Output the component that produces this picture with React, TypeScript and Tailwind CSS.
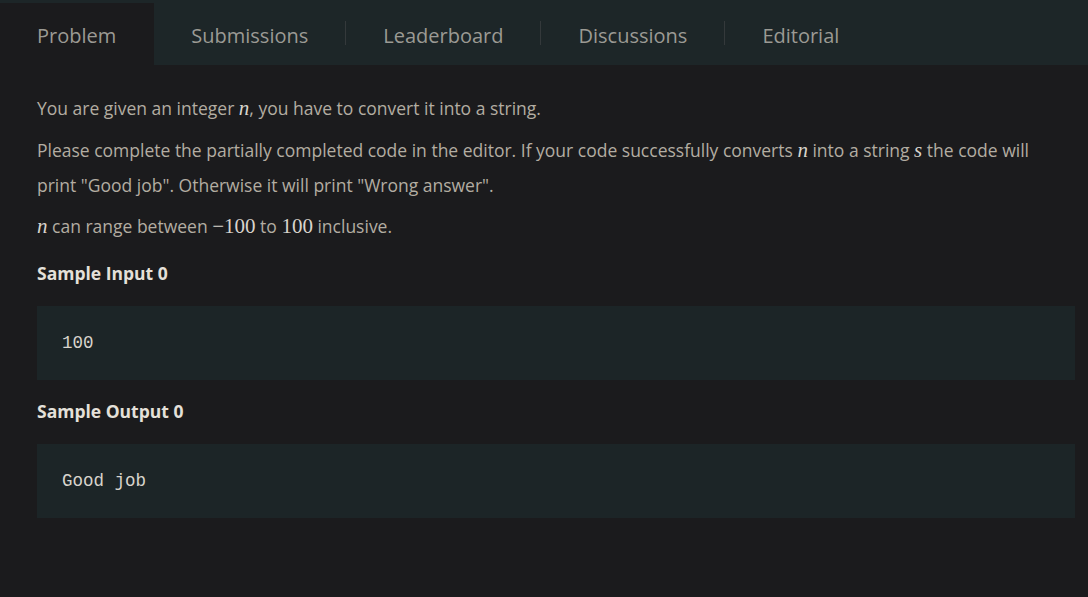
import React from "react";

const M = ({ children }: { children: React.ReactNode }) => (
  <span className="font-['Liberation_Serif',serif] text-[21px] italic leading-none text-[#d8d4cc]">{children}</span>
);
const N = ({ children }: { children: React.ReactNode }) => (
  <span className="font-['Liberation_Serif',serif] text-[21px] leading-none text-[#d8d4cc]">{children}</span>
);

export default function App() {
  const tabs = ["Submissions", "Leaderboard", "Discussions", "Editorial"];
  return (
    <div className="min-h-[597px] w-[1088px] bg-[#1b1b1d] font-['Open_Sans',sans-serif]">
      <div className="flex h-[65px] bg-[#1d2628]">
        <div className="mt-[3px] flex items-center bg-[#1b1b1d] pl-[37px] pr-[38px] pt-[4px] text-[20px] text-[#9b9a94]">
          Problem
        </div>
        {tabs.map((t, i) => (
          <div key={t} className="flex items-center">
            {i > 0 && <div className="h-[24px] w-px bg-[#34393b]" />}
            <div className="px-[37px] pt-[7px] text-[20px] text-[#9b9a94]">{t}</div>
          </div>
        ))}
      </div>
      <div className="px-[37px] pr-[13px] pt-[26px] text-[17.5px] text-[#b3ada2]">
        <p className="leading-[35px]">
          You are given an integer <M>n</M>, you have to convert it into a string.
        </p>
        <p className="mr-[30px] mt-[7px] leading-[35px]">
          Please complete the partially completed code in the editor. If your code successfully converts <M>n</M> into a
          string <M>s</M> the code will print "Good job". Otherwise it will print "Wrong answer".
        </p>
        <p className="mt-[6px] leading-[35px]">
          <M>n</M> can range between <N>−100</N> to <N>100</N> inclusive.
        </p>
        <h3 className="mt-[18px] text-[17.5px] font-bold leading-[22px] text-[#e4e0d9]">Sample Input 0</h3>
        <pre className="mt-[22px] h-[74px] bg-[#1c2527] px-[25px] pt-[25px] font-['Liberation_Mono',monospace] text-[17.5px] leading-[24px] text-[#d8d4cc]">
          100
        </pre>
        <h3 className="mt-[20px] text-[17.5px] font-bold leading-[22px] text-[#e4e0d9]">Sample Output 0</h3>
        <pre className="mt-[22px] h-[74px] bg-[#1c2527] px-[25px] pt-[25px] font-['Liberation_Mono',monospace] text-[17.5px] leading-[24px] text-[#d8d4cc]">
          Good job
        </pre>
      </div>
    </div>
  );
}
